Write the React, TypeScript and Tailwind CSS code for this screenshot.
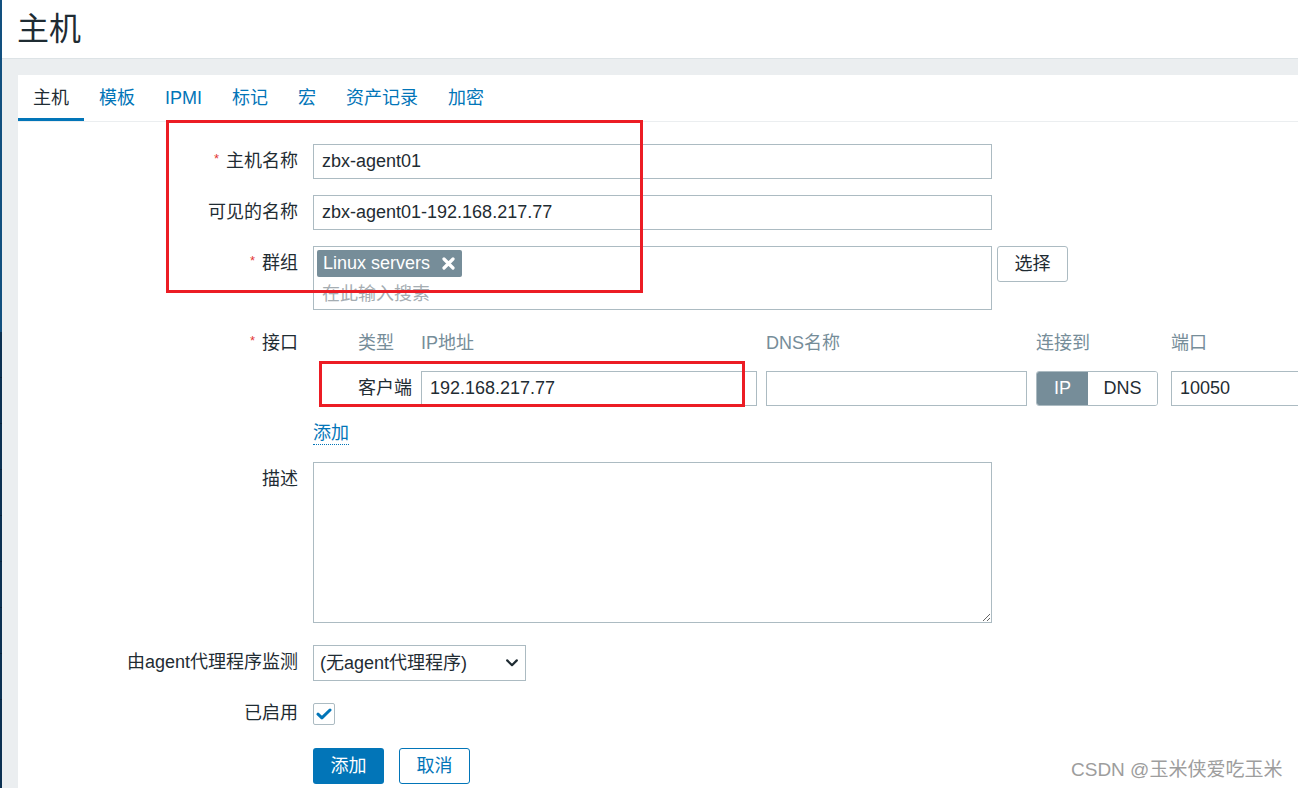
import * as React from "react";

const tabs = ["主机", "模板", "IPMI", "标记", "宏", "资产记录", "加密"];

const inputCls =
  "h-[35px] border border-[#acbbc2] bg-white px-[8px] text-[18px] text-[#1f2c33] outline-none";

function Required() {
  return (
    <span className="mr-[7px] -translate-y-[3px] text-[13px] leading-none text-[#e33734]">
      *
    </span>
  );
}

function FormRow({
  label,
  required,
  className,
  children,
}: {
  label: string;
  required?: boolean;
  className?: string;
  children: React.ReactNode;
}) {
  return (
    <div className={"flex " + (className ?? "")}>
      <div className="flex h-[35px] w-[280px] shrink-0 items-center justify-end">
        {required && <Required />}
        <span>{label}</span>
      </div>
      <div className="ml-[15px]">{children}</div>
    </div>
  );
}

function SideStrip() {
  return (
    <div className="flex w-[2px] shrink-0 flex-col">
      <div className="h-[332px] bg-[#12507f]" />
      <div className="flex flex-1 flex-col bg-[#0c3152]">
        {[...Array(8)].map((_, i) => (
          <div key={i} className="h-[46px] border-b border-[#08233c]" />
        ))}
      </div>
    </div>
  );
}

function Chevron() {
  return (
    <svg width="12" height="8" viewBox="0 0 12 8" fill="none">
      <path
        d="M1.2 1.4 6 6.2l4.8-4.8"
        stroke="#1f2c33"
        strokeWidth="2.2"
        strokeLinecap="round"
        strokeLinejoin="round"
      />
    </svg>
  );
}

export default function App() {
  return (
    <div className="relative flex h-[788px] w-[1298px] overflow-hidden bg-[#ebeef0] font-['Liberation_Sans','Noto_Sans_CJK_SC',sans-serif] text-[18px] text-[#1f2c33]">
      <SideStrip />

      <div className="flex min-w-0 flex-1 flex-col">
        <header className="flex h-[59px] shrink-0 items-center border-b border-[#dde3e6] bg-white pl-[15px]">
          <h1 className="text-[32px] leading-none text-[#1f2c33]">主机</h1>
        </header>

        <div className="flex-1 pl-[16px] pt-[16px]">
          <div className="h-full w-[1340px] bg-white">
            {/* tabs */}
            <div className="flex h-[47px] border-b border-[#ebeef0]">
              {tabs.map((t, i) => (
                <div
                  key={t}
                  className={
                    i === 0
                      ? "flex items-center border-b-[3px] border-[#0275b8] px-[15px] pt-[3px] text-[#1f2c33]"
                      : "flex items-center border-b-[3px] border-transparent px-[15px] pt-[3px] text-[#0275b8]"
                  }
                >
                  {t}
                </div>
              ))}
            </div>

            {/* form */}
            <div className="pt-[22px]">
              <FormRow label="主机名称" required>
                <input className={inputCls + " w-[679px]"} defaultValue="zbx-agent01" readOnly />
              </FormRow>

              <FormRow label="可见的名称" className="mt-[16px]">
                <input
                  className={inputCls + " w-[679px]"}
                  defaultValue="zbx-agent01-192.168.217.77"
                  readOnly
                />
              </FormRow>

              <FormRow label="群组" required className="mt-[16px]">
                <div className="flex items-start">
                  <div className="h-[64px] w-[679px] border border-[#acbbc2] px-[3px] pt-[3px]">
                    <div className="inline-flex h-[27px] items-center rounded-[2px] bg-[#768d99] pl-[6px] pr-[7px] text-white">
                      <span>Linux servers</span>
                      <svg className="ml-[12px]" width="13" height="13" viewBox="0 0 13 13">
                        <path
                          d="M2 2l9 9M11 2l-9 9"
                          stroke="#fff"
                          strokeWidth="3.2"
                          strokeLinecap="round"
                        />
                      </svg>
                    </div>
                    <div className="mt-[4px] pl-[5px] leading-[26px] text-[#a5adb2]">在此输入搜索</div>
                  </div>
                  <button className="ml-[5px] h-[36px] w-[71px] rounded-[3px] border border-[#acbbc2] bg-white text-[#1f2c33]">
                    选择
                  </button>
                </div>
              </FormRow>

              <FormRow label="接口" required className="mt-[16px]">
                <div>
                  <div className="flex h-[35px] items-center text-[#768d99]">
                    <div className="w-[45px]" />
                    <div className="w-[63px]">类型</div>
                    <div className="w-[336px]">IP地址</div>
                    <div className="ml-[9px] w-[261px]">DNS名称</div>
                    <div className="ml-[9px] w-[122px]">连接到</div>
                    <div className="ml-[13px] w-[150px]">端口</div>
                  </div>
                  <div className="mt-[10px] flex h-[35px] items-center">
                    <div className="w-[45px]" />
                    <div className="w-[63px]">客户端</div>
                    <input className={inputCls + " w-[336px]"} defaultValue="192.168.217.77" readOnly />
                    <input className={inputCls + " ml-[9px] w-[261px]"} defaultValue="" readOnly />
                    <div className="ml-[9px] flex h-[35px] w-[122px] overflow-hidden rounded-[3px] border border-[#acbbc2]">
                      <div className="flex w-[51px] items-center justify-center bg-[#768d99] text-white">IP</div>
                      <div className="flex flex-1 items-center justify-center bg-white">DNS</div>
                    </div>
                    <input className={inputCls + " ml-[13px] w-[150px]"} defaultValue="10050" readOnly />
                  </div>
                  <div className="mt-[10px] flex h-[35px] items-center">
                    <span className="border-b border-dotted border-[#0275b8] leading-[21px] text-[#0275b8]">添加</span>
                  </div>
                </div>
              </FormRow>

              <FormRow label="描述" className="mt-[11px]">
                <textarea className="block h-[161px] w-[679px] border border-[#acbbc2] bg-white outline-none" readOnly />
              </FormRow>

              <FormRow label="由agent代理程序监测" className="mt-[22px]">
                <div className="flex h-[36px] w-[213px] items-center justify-between border border-[#acbbc2] bg-white pl-[6px] pr-[7px]">
                  <span>(无agent代理程序)</span>
                  <Chevron />
                </div>
              </FormRow>

              <FormRow label="已启用" className="mt-[15px]">
                <div className="flex h-[35px] items-center">
                  <div className="flex h-[22px] w-[22px] items-center justify-center rounded-[2px] border border-[#acbbc2] bg-white">
                    <svg width="16" height="12" viewBox="0 0 16 12" fill="none">
                      <path
                        d="M2 6.2l3.9 3.6L14 2"
                        stroke="#0275b8"
                        strokeWidth="3"
                        strokeLinecap="round"
                        strokeLinejoin="round"
                      />
                    </svg>
                  </div>
                </div>
              </FormRow>

              <div className="mt-[17px] flex pl-[295px]">
                <button className="h-[36px] w-[71px] rounded-[3px] bg-[#0275b8] text-white">添加</button>
                <button className="ml-[15px] h-[36px] w-[71px] rounded-[3px] border border-[#0275b8] bg-white text-[#0275b8]">
                  取消
                </button>
              </div>
            </div>
          </div>
        </div>
      </div>

      {/* red annotation boxes */}
      <div className="pointer-events-none absolute left-[166px] top-[120px] h-[173px] w-[477px] border-[3px] border-[#ec1c24]" />
      <div className="pointer-events-none absolute left-[319px] top-[361px] h-[46px] w-[426px] border-[3px] border-[#ec1c24]" />

      <div className="pointer-events-none absolute left-[1071px] top-[758px] text-[19px] leading-[23px] text-[#9d9d9d]">
        CSDN @玉米侠爱吃玉米
      </div>
    </div>
  );
}
